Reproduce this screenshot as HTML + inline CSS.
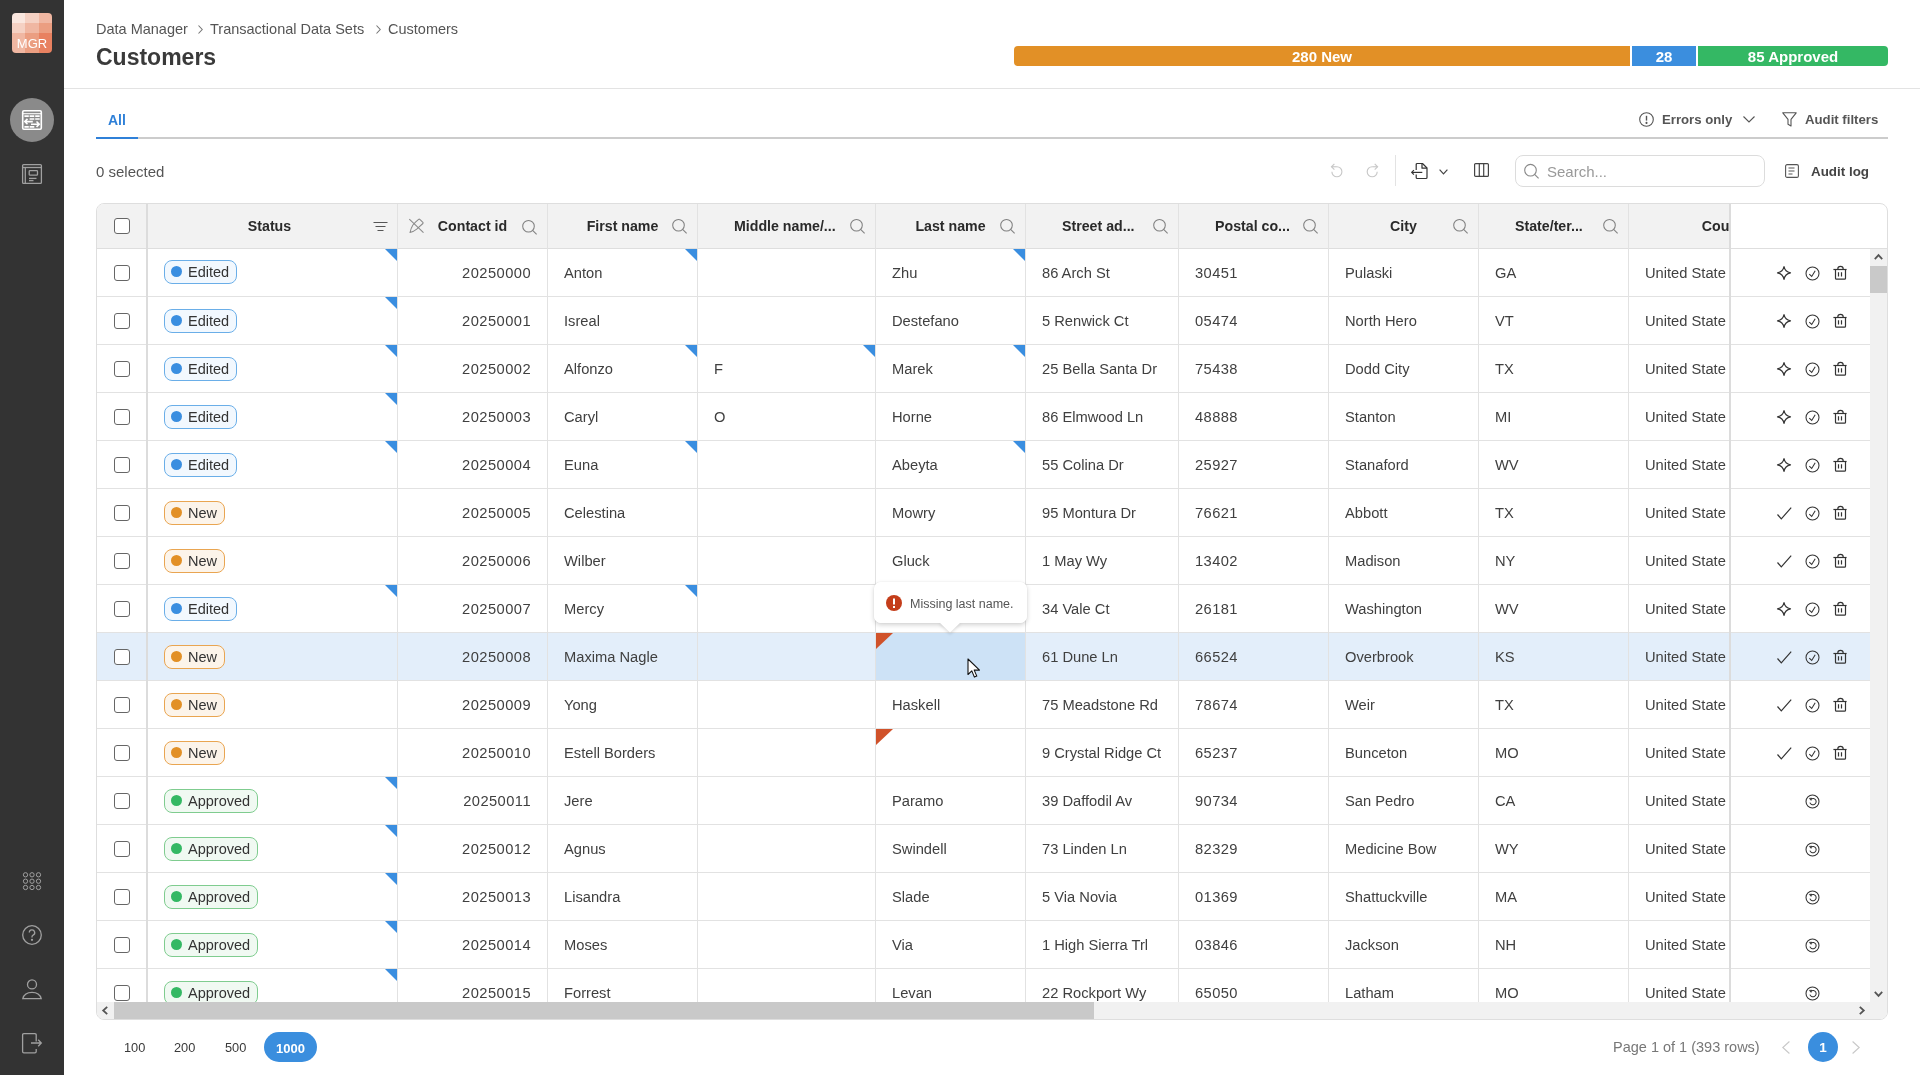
<!DOCTYPE html><html><head><meta charset="utf-8"><title>Customers</title><style>
*{box-sizing:border-box;margin:0;padding:0}
html,body{width:1920px;height:1075px;overflow:hidden;background:#fff}
body{position:relative;font-family:"Liberation Sans",sans-serif;color:#333}
.abs{position:absolute}
svg{display:block;overflow:visible}
.t{position:absolute;white-space:nowrap;line-height:1}
.cell{position:absolute;font-size:14.7px;color:#404040;white-space:nowrap;line-height:48px;height:47px}
.num{letter-spacing:0.45px}
.hd{position:absolute;top:204px;height:44px;line-height:44px;font-size:14.2px;font-weight:bold;color:#2a2a2a;text-align:center;white-space:nowrap}
.vl{position:absolute;width:1px;background:#e2e2e2}
.hl{position:absolute;height:1px;background:#e2e2e2}
.cb{position:absolute;width:16px;height:16px;border:1.5px solid #666;border-radius:3px;background:#fff}
.badge{position:absolute;height:24px;border-radius:8px;border:1px solid;font-size:14.5px;line-height:22px;padding-left:23px;color:#333}
.badge i{position:absolute;left:6px;top:5px;width:11px;height:11px;border-radius:50%}
.tri{position:absolute;width:0;height:0}
</style></head><body><div id="root" style="position:absolute;left:0;top:0;width:1920px;height:1075px;will-change:transform">
<div class="abs" style="left:0;top:0;width:64px;height:1075px;background:#333333"></div>
<div class="abs" style="left:12px;top:13px;width:40px;height:40px;border-radius:4px;overflow:hidden">
<div class="abs" style="left:0px;top:0px;width:13px;height:10px;background:#fae7df"></div>
<div class="abs" style="left:13px;top:0px;width:14px;height:10px;background:#f5d1c3"></div>
<div class="abs" style="left:27px;top:0px;width:13px;height:10px;background:#f0b7a2"></div>
<div class="abs" style="left:0px;top:10px;width:13px;height:10px;background:#f5d1c3"></div>
<div class="abs" style="left:13px;top:10px;width:14px;height:10px;background:#f0b7a2"></div>
<div class="abs" style="left:27px;top:10px;width:13px;height:10px;background:#eb9e81"></div>
<div class="abs" style="left:0px;top:20px;width:13px;height:20px;background:#f0b7a2"></div>
<div class="abs" style="left:13px;top:20px;width:14px;height:20px;background:#eb9e81"></div>
<div class="abs" style="left:27px;top:20px;width:13px;height:20px;background:#e88160"></div>
<div class="t" style="left:0;top:24px;width:40px;text-align:center;font-size:13px;color:#fff;letter-spacing:0px">MGR</div>
</div>
<div class="abs" style="left:10px;top:98px;width:44px;height:44px;border-radius:50%;background:#8a8a8a"></div>
<svg class="abs" style="left:18px;top:106px" width="28" height="28" viewBox="0 0 28 28" fill="none" stroke="#fff">
<rect x="4.7" y="4.7" width="18.6" height="18.6" rx="1.2" stroke-width="1.6"/><line x1="4.7" y1="7.7" x2="23.3" y2="7.7" stroke-width="1.1"/>
<path d="M6.4 10.2h4.4M11.6 10.2h4.7M17.2 10.2h4.5M11.6 13h4.7M17.2 13h4.5M6.4 20.9h4.4M11.6 20.9h4.7" stroke-width="1.7"/>
<path d="M6.8 15.6h8M9.5 12.9L6.8 15.6l2.7 2.7M13 18.2h8.2M18.5 15.5l2.7 2.7-2.7 2.7" stroke-width="1.6"/>
</svg>
<svg class="abs" style="left:18px;top:160px" width="28" height="28" viewBox="0 0 28 28" fill="none" stroke="#a0a0a0" stroke-width="1.3">
<rect x="4.6" y="4.6" width="18.8" height="18.8" rx="1"/><line x1="4.6" y1="7.5" x2="23.4" y2="7.5"/><line x1="7.3" y1="7.5" x2="7.3" y2="23.4"/>
<rect x="11.2" y="10.6" width="8.3" height="4.6" rx="0.8"/><line x1="11" y1="18.4" x2="18.5" y2="18.4"/><line x1="11" y1="20.6" x2="15.5" y2="20.6"/>
</svg>
<svg class="abs" style="left:22px;top:872px" width="20" height="18" viewBox="0 0 20 18" fill="none" stroke="#a0a0a0" stroke-width="1"><circle cx="3.5" cy="2.8" r="2.15"/><circle cx="10" cy="2.8" r="2.15"/><circle cx="16.5" cy="2.8" r="2.15"/><circle cx="3.5" cy="9.2" r="2.15"/><circle cx="10" cy="9.2" r="2.15"/><circle cx="16.5" cy="9.2" r="2.15"/><circle cx="3.5" cy="15.5" r="2.15"/><circle cx="10" cy="15.5" r="2.15"/><circle cx="16.5" cy="15.5" r="2.15"/></svg>
<svg class="abs" style="left:22px;top:925px" width="20" height="20" viewBox="0 0 20 20" fill="none" stroke="#a0a0a0" stroke-width="1.3">
<circle cx="10" cy="10" r="9.3"/><path d="M7.3 7.6a2.7 2.7 0 1 1 3.8 2.5c-0.8 0.4-1.1 0.9-1.1 1.7v0.8"/><circle cx="10" cy="14.8" r="0.5" fill="#a0a0a0"/>
</svg>
<svg class="abs" style="left:22px;top:978px" width="20" height="21" viewBox="0 0 20 21" fill="none" stroke="#a0a0a0" stroke-width="1.3">
<circle cx="10" cy="6.4" r="4.5"/><path d="M0.8 20.6C2 16.2 5.5 14.4 10 14.4S18 16.2 19.2 20.6Z"/>
</svg>
<svg class="abs" style="left:22px;top:1033px" width="20" height="20" viewBox="0 0 20 20" fill="none" stroke="#a0a0a0" stroke-width="1.3">
<path d="M14.2 8.6V2Q14.2 0.7 12.9 0.7H1.9Q0.6 0.7 0.6 2V18.5Q0.6 19.8 1.9 19.8H12.9Q14.2 19.8 14.2 18.5V15.9"/><path d="M9 10H19.3M16.2 6.8L19.3 10 16.2 13.2"/>
</svg>
<div class="t" style="left:96px;top:22px;font-size:14.5px;color:#555">Data Manager</div>
<svg class="abs" style="left:198px;top:25px" width="5" height="9" viewBox="0 0 5 9" fill="none" stroke="#777" stroke-width="1.1"><path d="M0.5 0.5L4.2 4.5L0.5 8.5"/></svg>
<div class="t" style="left:210px;top:22px;font-size:14.5px;color:#555">Transactional Data Sets</div>
<svg class="abs" style="left:376px;top:25px" width="5" height="9" viewBox="0 0 5 9" fill="none" stroke="#777" stroke-width="1.1"><path d="M0.5 0.5L4.2 4.5L0.5 8.5"/></svg>
<div class="t" style="left:388px;top:22px;font-size:14.5px;color:#555">Customers</div>
<div class="t" style="left:96px;top:45.5px;font-size:23px;font-weight:bold;color:#3a3a3a">Customers</div>
<div class="abs" style="left:1014px;top:46px;width:616px;height:20px;background:#e29026;border-radius:4px 0 0 4px"></div>
<div class="abs" style="left:1632px;top:46px;width:64px;height:20px;background:#3b8ede"></div>
<div class="abs" style="left:1698px;top:46px;width:190px;height:20px;background:#34b864;border-radius:0 4px 4px 0"></div>
<div class="t" style="left:1014px;top:49px;width:616px;text-align:center;font-size:15px;font-weight:bold;color:#fff">280 New</div>
<div class="t" style="left:1632px;top:49px;width:64px;text-align:center;font-size:15px;font-weight:bold;color:#fff">28</div>
<div class="t" style="left:1698px;top:49px;width:190px;text-align:center;font-size:15px;font-weight:bold;color:#fff">85 Approved</div>
<div class="abs" style="left:64px;top:88px;width:1856px;height:1px;background:#e3e3e3"></div>
<div class="abs" style="left:96px;top:137px;width:1792px;height:2px;background:#cccccc"></div>
<div class="abs" style="left:96px;top:137px;width:42px;height:2px;background:#2f80d8"></div>
<div class="t" style="left:108px;top:112.5px;font-size:14px;font-weight:bold;color:#2f80d8">All</div>
<svg class="abs" style="left:1639px;top:112px" width="15" height="15" viewBox="0 0 15 15" fill="none" stroke="#555" stroke-width="1.1">
<circle cx="7.5" cy="7.5" r="6.8"/><line x1="7.5" y1="3.8" x2="7.5" y2="8.6" stroke-width="1.4"/><circle cx="7.5" cy="10.9" r="0.5" fill="#555"/>
</svg>
<div class="t" style="left:1662px;top:113px;font-size:13.2px;font-weight:bold;color:#555">Errors only</div>
<svg class="abs" style="left:1743px;top:116px" width="12" height="7" viewBox="0 0 12 7" fill="none" stroke="#555" stroke-width="1.1"><path d="M0.5 0.5L6 6L11.5 0.5"/></svg>
<svg class="abs" style="left:1782px;top:112px" width="15" height="15" viewBox="0 0 15 15" fill="none" stroke="#555" stroke-width="1.1" stroke-linejoin="round">
<path d="M0.8 0.8h13.4L9 7.3v6.6L6 12.2V7.3z"/>
</svg>
<div class="t" style="left:1805px;top:113px;font-size:13.2px;font-weight:bold;color:#555">Audit filters</div>
<div class="t" style="left:96px;top:164px;font-size:15px;color:#555">0 selected</div>
<svg class="abs" style="left:1330px;top:163px" width="14" height="14" viewBox="0 0 14 14" fill="none" stroke="#c8c8c8" stroke-width="1.15">
<path d="M6.9 3.75A5 5 0 1 1 1.9 8.75"/><path d="M1.5 3.75H6.9"/><path d="M4.4 0.9L1.5 3.75 4.4 6.6"/>
</svg>
<svg class="abs" style="left:1365px;top:163px" width="14" height="14" viewBox="0 0 14 14" fill="none" stroke="#c8c8c8" stroke-width="1.15">
<path d="M7.2 3.75A5 5 0 1 0 12.2 8.75"/><path d="M7.2 3.75H12.6"/><path d="M9.7 0.9L12.6 3.75 9.7 6.6"/>
</svg>
<div class="abs" style="left:1395px;top:155px;width:1px;height:31px;background:#e3e3e3"></div>
<svg class="abs" style="left:1411px;top:163px" width="18" height="16" viewBox="0 0 18 16" fill="none" stroke="#333" stroke-width="1.2" stroke-linejoin="round">
<path d="M5.2 7V1.5Q5.2 0.5 6.2 0.5H11.5L16 5V14.5Q16 15.5 15 15.5H6.2Q5.2 15.5 5.2 14.5V11.6"/><path d="M11 0.5V5.2H16"/><path d="M0.7 9.4H11.3"/><path d="M2.9 7.2L0.7 9.4 2.9 11.6"/>
</svg>
<svg class="abs" style="left:1439px;top:169px" width="9" height="6" viewBox="0 0 9 6" fill="none" stroke="#444" stroke-width="1.2"><path d="M0.6 0.6L4.5 4.8L8.4 0.6"/></svg>
<svg class="abs" style="left:1474px;top:163px" width="15" height="14" viewBox="0 0 15 14" fill="none" stroke="#444" stroke-width="1.2">
<rect x="0.6" y="0.6" width="13.8" height="12.8" rx="1"/><line x1="5.3" y1="0.6" x2="5.3" y2="13.4"/><line x1="9.7" y1="0.6" x2="9.7" y2="13.4"/>
</svg>
<div class="abs" style="left:1515px;top:155px;width:250px;height:32px;border:1px solid #dcdcdc;border-radius:8px;background:#fff"></div>
<svg class="abs" style="left:1524px;top:164px" width="15" height="15" viewBox="0 0 15 15" fill="none" stroke="#888" stroke-width="1.1"><circle cx="6.5" cy="6.2" r="5.8"/><line x1="10.6" y1="10.4" x2="14.6" y2="14.4"/></svg>
<div class="t" style="left:1547px;top:164px;font-size:15px;color:#999">Search...</div>
<svg class="abs" style="left:1785px;top:164px" width="14" height="14" viewBox="0 0 14 14" fill="none" stroke="#555" stroke-width="1.1">
<rect x="0.6" y="0.6" width="12.8" height="12.8" rx="1.5"/><path d="M3.5 4h6M3.5 7h6M3.5 10h4"/>
</svg>
<div class="t" style="left:1811px;top:165px;font-size:13.4px;font-weight:bold;color:#444">Audit log</div>
<div class="abs" style="left:96px;top:203px;width:1792px;height:817px;border:1px solid #dedede;border-radius:8px;background:#fff;overflow:hidden">
</div>
<div class="abs" style="left:97px;top:204px;width:1790px;height:815px;border-radius:7px;overflow:hidden">
<div class="abs" style="left:0;top:0;width:1632px;height:44px;background:#f2f2f2"></div>
<div class="hl" style="left:0;top:44px;width:1790px;background:#dedede"></div>
<div class="abs" style="left:0;top:429px;width:1773px;height:47px;background:#e3eefa"></div>
<div class="abs" style="left:779px;top:429px;width:149px;height:47px;background:#cde2f6"></div>
<div class="hl" style="left:0;top:92px;width:1773px"></div>
<div class="hl" style="left:0;top:140px;width:1773px"></div>
<div class="hl" style="left:0;top:188px;width:1773px"></div>
<div class="hl" style="left:0;top:236px;width:1773px"></div>
<div class="hl" style="left:0;top:284px;width:1773px"></div>
<div class="hl" style="left:0;top:332px;width:1773px"></div>
<div class="hl" style="left:0;top:380px;width:1773px"></div>
<div class="hl" style="left:0;top:428px;width:1773px"></div>
<div class="hl" style="left:0;top:476px;width:1773px"></div>
<div class="hl" style="left:0;top:524px;width:1773px"></div>
<div class="hl" style="left:0;top:572px;width:1773px"></div>
<div class="hl" style="left:0;top:620px;width:1773px"></div>
<div class="hl" style="left:0;top:668px;width:1773px"></div>
<div class="hl" style="left:0;top:716px;width:1773px"></div>
<div class="hl" style="left:0;top:764px;width:1773px"></div>
<div class="vl" style="left:300px;top:0;height:798px"></div>
<div class="vl" style="left:450px;top:0;height:798px"></div>
<div class="vl" style="left:600px;top:0;height:798px"></div>
<div class="vl" style="left:778px;top:0;height:798px"></div>
<div class="vl" style="left:928px;top:0;height:798px"></div>
<div class="vl" style="left:1081px;top:0;height:798px"></div>
<div class="vl" style="left:1231px;top:0;height:798px"></div>
<div class="vl" style="left:1381px;top:0;height:798px"></div>
<div class="vl" style="left:1531px;top:0;height:798px"></div>
<div class="abs" style="left:49px;top:0;width:2px;height:798px;background:#dcdcdc"></div>
<div class="cb" style="left:17px;top:14px"></div>
<div class="hd" style="left:48px;top:0;width:249px">Status</div>
<svg class="abs" style="left:276px;top:18px" width="15" height="9" viewBox="0 0 15 9" fill="none" stroke="#555" stroke-width="1.2"><path d="M0.5 0.5h14M2.5 4.5h10M4.5 8.5h6"/></svg>
<div class="hd" style="left:301px;top:0;width:149px">Contact id</div>
<svg class="abs" style="left:312px;top:15px" width="15" height="14" viewBox="0 0 15 14" fill="none" stroke="#8a8a8a" stroke-width="1.05" stroke-linejoin="round">
<path d="M0.3 0.2L14.5 13.7"/><path d="M3.9 6L6.5 3.2 9.6 0.4Q10.2-0.1 10.8 0.4L13.9 3.4Q14.4 4 13.9 4.5L7.7 10.2Q5 12.5 1 13.5Q2 9 3.9 6z"/>
</svg>
<svg class="abs" style="left:425px;top:16px" width="15" height="15" viewBox="0 0 15 15" fill="none" stroke="#808080" stroke-width="1.05"><circle cx="6.5" cy="6.2" r="5.8"/><line x1="10.6" y1="10.4" x2="14.6" y2="14.4"/></svg>
<div class="hd" style="left:487px;top:0;width:77px;text-align:center">First name</div>
<svg class="abs" style="left:575px;top:15px" width="15" height="15" viewBox="0 0 15 15" fill="none" stroke="#808080" stroke-width="1.05"><circle cx="6.5" cy="6.2" r="5.8"/><line x1="10.6" y1="10.4" x2="14.6" y2="14.4"/></svg>
<div class="hd" style="left:637px;top:0;width:105px;text-align:left">Middle name/...</div>
<svg class="abs" style="left:753px;top:15px" width="15" height="15" viewBox="0 0 15 15" fill="none" stroke="#808080" stroke-width="1.05"><circle cx="6.5" cy="6.2" r="5.8"/><line x1="10.6" y1="10.4" x2="14.6" y2="14.4"/></svg>
<div class="hd" style="left:815px;top:0;width:77px;text-align:center">Last name</div>
<svg class="abs" style="left:903px;top:15px" width="15" height="15" viewBox="0 0 15 15" fill="none" stroke="#808080" stroke-width="1.05"><circle cx="6.5" cy="6.2" r="5.8"/><line x1="10.6" y1="10.4" x2="14.6" y2="14.4"/></svg>
<div class="hd" style="left:965px;top:0;width:80px;text-align:left">Street ad...</div>
<svg class="abs" style="left:1056px;top:15px" width="15" height="15" viewBox="0 0 15 15" fill="none" stroke="#808080" stroke-width="1.05"><circle cx="6.5" cy="6.2" r="5.8"/><line x1="10.6" y1="10.4" x2="14.6" y2="14.4"/></svg>
<div class="hd" style="left:1118px;top:0;width:77px;text-align:left">Postal co...</div>
<svg class="abs" style="left:1206px;top:15px" width="15" height="15" viewBox="0 0 15 15" fill="none" stroke="#808080" stroke-width="1.05"><circle cx="6.5" cy="6.2" r="5.8"/><line x1="10.6" y1="10.4" x2="14.6" y2="14.4"/></svg>
<div class="hd" style="left:1268px;top:0;width:77px;text-align:center">City</div>
<svg class="abs" style="left:1356px;top:15px" width="15" height="15" viewBox="0 0 15 15" fill="none" stroke="#808080" stroke-width="1.05"><circle cx="6.5" cy="6.2" r="5.8"/><line x1="10.6" y1="10.4" x2="14.6" y2="14.4"/></svg>
<div class="hd" style="left:1418px;top:0;width:77px;text-align:left">State/ter...</div>
<svg class="abs" style="left:1506px;top:15px" width="15" height="15" viewBox="0 0 15 15" fill="none" stroke="#808080" stroke-width="1.05"><circle cx="6.5" cy="6.2" r="5.8"/><line x1="10.6" y1="10.4" x2="14.6" y2="14.4"/></svg>
<div class="hd" style="left:1532px;top:0;width:200px">Country</div>
<div class="cb" style="left:17px;top:61px"></div>
<div class="badge" style="left:67px;top:56px;width:73px;border-color:#6aaee8;background:#f2f8fe"><i style="background:#3a8ee0"></i>Edited</div>
<div class="cell num" style="left:301px;top:45px;width:133px;text-align:right;letter-spacing:0.45px">20250000</div>
<div class="cell" style="left:467px;top:45px">Anton</div>
<div class="cell" style="left:795px;top:45px">Zhu</div>
<div class="cell" style="left:945px;top:45px">86 Arch St</div>
<div class="cell" style="left:1098px;top:45px;letter-spacing:0.4px">30451</div>
<div class="cell" style="left:1248px;top:45px">Pulaski</div>
<div class="cell" style="left:1398px;top:45px">GA</div>
<div class="cell" style="left:1548px;top:45px;width:84px;overflow:hidden">United State</div>
<div class="tri" style="left:288px;top:45px;border-top:12px solid #3a8ee0;border-left:12px solid transparent"></div>
<div class="tri" style="left:588px;top:45px;border-top:12px solid #3a8ee0;border-left:12px solid transparent"></div>
<div class="tri" style="left:916px;top:45px;border-top:12px solid #3a8ee0;border-left:12px solid transparent"></div>
<div class="cb" style="left:17px;top:109px"></div>
<div class="badge" style="left:67px;top:105px;width:73px;border-color:#6aaee8;background:#f2f8fe"><i style="background:#3a8ee0"></i>Edited</div>
<div class="cell num" style="left:301px;top:93px;width:133px;text-align:right;letter-spacing:0.45px">20250001</div>
<div class="cell" style="left:467px;top:93px">Isreal</div>
<div class="cell" style="left:795px;top:93px">Destefano</div>
<div class="cell" style="left:945px;top:93px">5 Renwick Ct</div>
<div class="cell" style="left:1098px;top:93px;letter-spacing:0.4px">05474</div>
<div class="cell" style="left:1248px;top:93px">North Hero</div>
<div class="cell" style="left:1398px;top:93px">VT</div>
<div class="cell" style="left:1548px;top:93px;width:84px;overflow:hidden">United State</div>
<div class="tri" style="left:288px;top:93px;border-top:12px solid #3a8ee0;border-left:12px solid transparent"></div>
<div class="cb" style="left:17px;top:157px"></div>
<div class="badge" style="left:67px;top:153px;width:73px;border-color:#6aaee8;background:#f2f8fe"><i style="background:#3a8ee0"></i>Edited</div>
<div class="cell num" style="left:301px;top:141px;width:133px;text-align:right;letter-spacing:0.45px">20250002</div>
<div class="cell" style="left:467px;top:141px">Alfonzo</div>
<div class="cell" style="left:617px;top:141px">F</div>
<div class="cell" style="left:795px;top:141px">Marek</div>
<div class="cell" style="left:945px;top:141px">25 Bella Santa Dr</div>
<div class="cell" style="left:1098px;top:141px;letter-spacing:0.4px">75438</div>
<div class="cell" style="left:1248px;top:141px">Dodd City</div>
<div class="cell" style="left:1398px;top:141px">TX</div>
<div class="cell" style="left:1548px;top:141px;width:84px;overflow:hidden">United State</div>
<div class="tri" style="left:288px;top:141px;border-top:12px solid #3a8ee0;border-left:12px solid transparent"></div>
<div class="tri" style="left:588px;top:141px;border-top:12px solid #3a8ee0;border-left:12px solid transparent"></div>
<div class="tri" style="left:766px;top:141px;border-top:12px solid #3a8ee0;border-left:12px solid transparent"></div>
<div class="tri" style="left:916px;top:141px;border-top:12px solid #3a8ee0;border-left:12px solid transparent"></div>
<div class="cb" style="left:17px;top:205px"></div>
<div class="badge" style="left:67px;top:201px;width:73px;border-color:#6aaee8;background:#f2f8fe"><i style="background:#3a8ee0"></i>Edited</div>
<div class="cell num" style="left:301px;top:189px;width:133px;text-align:right;letter-spacing:0.45px">20250003</div>
<div class="cell" style="left:467px;top:189px">Caryl</div>
<div class="cell" style="left:617px;top:189px">O</div>
<div class="cell" style="left:795px;top:189px">Horne</div>
<div class="cell" style="left:945px;top:189px">86 Elmwood Ln</div>
<div class="cell" style="left:1098px;top:189px;letter-spacing:0.4px">48888</div>
<div class="cell" style="left:1248px;top:189px">Stanton</div>
<div class="cell" style="left:1398px;top:189px">MI</div>
<div class="cell" style="left:1548px;top:189px;width:84px;overflow:hidden">United State</div>
<div class="tri" style="left:288px;top:189px;border-top:12px solid #3a8ee0;border-left:12px solid transparent"></div>
<div class="cb" style="left:17px;top:253px"></div>
<div class="badge" style="left:67px;top:249px;width:73px;border-color:#6aaee8;background:#f2f8fe"><i style="background:#3a8ee0"></i>Edited</div>
<div class="cell num" style="left:301px;top:237px;width:133px;text-align:right;letter-spacing:0.45px">20250004</div>
<div class="cell" style="left:467px;top:237px">Euna</div>
<div class="cell" style="left:795px;top:237px">Abeyta</div>
<div class="cell" style="left:945px;top:237px">55 Colina Dr</div>
<div class="cell" style="left:1098px;top:237px;letter-spacing:0.4px">25927</div>
<div class="cell" style="left:1248px;top:237px">Stanaford</div>
<div class="cell" style="left:1398px;top:237px">WV</div>
<div class="cell" style="left:1548px;top:237px;width:84px;overflow:hidden">United State</div>
<div class="tri" style="left:288px;top:237px;border-top:12px solid #3a8ee0;border-left:12px solid transparent"></div>
<div class="tri" style="left:588px;top:237px;border-top:12px solid #3a8ee0;border-left:12px solid transparent"></div>
<div class="tri" style="left:916px;top:237px;border-top:12px solid #3a8ee0;border-left:12px solid transparent"></div>
<div class="cb" style="left:17px;top:301px"></div>
<div class="badge" style="left:67px;top:297px;width:61px;border-color:#e9a551;background:#fcf4ea"><i style="background:#e29026"></i>New</div>
<div class="cell num" style="left:301px;top:285px;width:133px;text-align:right;letter-spacing:0.45px">20250005</div>
<div class="cell" style="left:467px;top:285px">Celestina</div>
<div class="cell" style="left:795px;top:285px">Mowry</div>
<div class="cell" style="left:945px;top:285px">95 Montura Dr</div>
<div class="cell" style="left:1098px;top:285px;letter-spacing:0.4px">76621</div>
<div class="cell" style="left:1248px;top:285px">Abbott</div>
<div class="cell" style="left:1398px;top:285px">TX</div>
<div class="cell" style="left:1548px;top:285px;width:84px;overflow:hidden">United State</div>
<div class="cb" style="left:17px;top:349px"></div>
<div class="badge" style="left:67px;top:345px;width:61px;border-color:#e9a551;background:#fcf4ea"><i style="background:#e29026"></i>New</div>
<div class="cell num" style="left:301px;top:333px;width:133px;text-align:right;letter-spacing:0.45px">20250006</div>
<div class="cell" style="left:467px;top:333px">Wilber</div>
<div class="cell" style="left:795px;top:333px">Gluck</div>
<div class="cell" style="left:945px;top:333px">1 May Wy</div>
<div class="cell" style="left:1098px;top:333px;letter-spacing:0.4px">13402</div>
<div class="cell" style="left:1248px;top:333px">Madison</div>
<div class="cell" style="left:1398px;top:333px">NY</div>
<div class="cell" style="left:1548px;top:333px;width:84px;overflow:hidden">United State</div>
<div class="cb" style="left:17px;top:397px"></div>
<div class="badge" style="left:67px;top:393px;width:73px;border-color:#6aaee8;background:#f2f8fe"><i style="background:#3a8ee0"></i>Edited</div>
<div class="cell num" style="left:301px;top:381px;width:133px;text-align:right;letter-spacing:0.45px">20250007</div>
<div class="cell" style="left:467px;top:381px">Mercy</div>
<div class="cell" style="left:945px;top:381px">34 Vale Ct</div>
<div class="cell" style="left:1098px;top:381px;letter-spacing:0.4px">26181</div>
<div class="cell" style="left:1248px;top:381px">Washington</div>
<div class="cell" style="left:1398px;top:381px">WV</div>
<div class="cell" style="left:1548px;top:381px;width:84px;overflow:hidden">United State</div>
<div class="tri" style="left:288px;top:381px;border-top:12px solid #3a8ee0;border-left:12px solid transparent"></div>
<div class="tri" style="left:588px;top:381px;border-top:12px solid #3a8ee0;border-left:12px solid transparent"></div>
<div class="cb" style="left:17px;top:445px"></div>
<div class="badge" style="left:67px;top:441px;width:61px;border-color:#e9a551;background:#fcf4ea"><i style="background:#e29026"></i>New</div>
<div class="cell num" style="left:301px;top:429px;width:133px;text-align:right;letter-spacing:0.45px">20250008</div>
<div class="cell" style="left:467px;top:429px">Maxima Nagle</div>
<div class="cell" style="left:945px;top:429px">61 Dune Ln</div>
<div class="cell" style="left:1098px;top:429px;letter-spacing:0.4px">66524</div>
<div class="cell" style="left:1248px;top:429px">Overbrook</div>
<div class="cell" style="left:1398px;top:429px">KS</div>
<div class="cell" style="left:1548px;top:429px;width:84px;overflow:hidden">United State</div>
<div class="tri" style="left:779px;top:429px;border-top:16px solid #d0522a;border-right:17px solid transparent"></div>
<div class="cb" style="left:17px;top:493px"></div>
<div class="badge" style="left:67px;top:489px;width:61px;border-color:#e9a551;background:#fcf4ea"><i style="background:#e29026"></i>New</div>
<div class="cell num" style="left:301px;top:477px;width:133px;text-align:right;letter-spacing:0.45px">20250009</div>
<div class="cell" style="left:467px;top:477px">Yong</div>
<div class="cell" style="left:795px;top:477px">Haskell</div>
<div class="cell" style="left:945px;top:477px">75 Meadstone Rd</div>
<div class="cell" style="left:1098px;top:477px;letter-spacing:0.4px">78674</div>
<div class="cell" style="left:1248px;top:477px">Weir</div>
<div class="cell" style="left:1398px;top:477px">TX</div>
<div class="cell" style="left:1548px;top:477px;width:84px;overflow:hidden">United State</div>
<div class="cb" style="left:17px;top:541px"></div>
<div class="badge" style="left:67px;top:537px;width:61px;border-color:#e9a551;background:#fcf4ea"><i style="background:#e29026"></i>New</div>
<div class="cell num" style="left:301px;top:525px;width:133px;text-align:right;letter-spacing:0.45px">20250010</div>
<div class="cell" style="left:467px;top:525px">Estell Borders</div>
<div class="cell" style="left:945px;top:525px">9 Crystal Ridge Ct</div>
<div class="cell" style="left:1098px;top:525px;letter-spacing:0.4px">65237</div>
<div class="cell" style="left:1248px;top:525px">Bunceton</div>
<div class="cell" style="left:1398px;top:525px">MO</div>
<div class="cell" style="left:1548px;top:525px;width:84px;overflow:hidden">United State</div>
<div class="tri" style="left:779px;top:525px;border-top:16px solid #d0522a;border-right:17px solid transparent"></div>
<div class="cb" style="left:17px;top:589px"></div>
<div class="badge" style="left:67px;top:585px;width:94px;border-color:#7fcc8f;background:#f0f9f2"><i style="background:#34b864"></i>Approved</div>
<div class="cell num" style="left:301px;top:573px;width:133px;text-align:right;letter-spacing:0.45px">20250011</div>
<div class="cell" style="left:467px;top:573px">Jere</div>
<div class="cell" style="left:795px;top:573px">Paramo</div>
<div class="cell" style="left:945px;top:573px">39 Daffodil Av</div>
<div class="cell" style="left:1098px;top:573px;letter-spacing:0.4px">90734</div>
<div class="cell" style="left:1248px;top:573px">San Pedro</div>
<div class="cell" style="left:1398px;top:573px">CA</div>
<div class="cell" style="left:1548px;top:573px;width:84px;overflow:hidden">United State</div>
<div class="tri" style="left:288px;top:573px;border-top:12px solid #3a8ee0;border-left:12px solid transparent"></div>
<div class="cb" style="left:17px;top:637px"></div>
<div class="badge" style="left:67px;top:633px;width:94px;border-color:#7fcc8f;background:#f0f9f2"><i style="background:#34b864"></i>Approved</div>
<div class="cell num" style="left:301px;top:621px;width:133px;text-align:right;letter-spacing:0.45px">20250012</div>
<div class="cell" style="left:467px;top:621px">Agnus</div>
<div class="cell" style="left:795px;top:621px">Swindell</div>
<div class="cell" style="left:945px;top:621px">73 Linden Ln</div>
<div class="cell" style="left:1098px;top:621px;letter-spacing:0.4px">82329</div>
<div class="cell" style="left:1248px;top:621px">Medicine Bow</div>
<div class="cell" style="left:1398px;top:621px">WY</div>
<div class="cell" style="left:1548px;top:621px;width:84px;overflow:hidden">United State</div>
<div class="tri" style="left:288px;top:621px;border-top:12px solid #3a8ee0;border-left:12px solid transparent"></div>
<div class="cb" style="left:17px;top:685px"></div>
<div class="badge" style="left:67px;top:681px;width:94px;border-color:#7fcc8f;background:#f0f9f2"><i style="background:#34b864"></i>Approved</div>
<div class="cell num" style="left:301px;top:669px;width:133px;text-align:right;letter-spacing:0.45px">20250013</div>
<div class="cell" style="left:467px;top:669px">Lisandra</div>
<div class="cell" style="left:795px;top:669px">Slade</div>
<div class="cell" style="left:945px;top:669px">5 Via Novia</div>
<div class="cell" style="left:1098px;top:669px;letter-spacing:0.4px">01369</div>
<div class="cell" style="left:1248px;top:669px">Shattuckville</div>
<div class="cell" style="left:1398px;top:669px">MA</div>
<div class="cell" style="left:1548px;top:669px;width:84px;overflow:hidden">United State</div>
<div class="tri" style="left:288px;top:669px;border-top:12px solid #3a8ee0;border-left:12px solid transparent"></div>
<div class="cb" style="left:17px;top:733px"></div>
<div class="badge" style="left:67px;top:729px;width:94px;border-color:#7fcc8f;background:#f0f9f2"><i style="background:#34b864"></i>Approved</div>
<div class="cell num" style="left:301px;top:717px;width:133px;text-align:right;letter-spacing:0.45px">20250014</div>
<div class="cell" style="left:467px;top:717px">Moses</div>
<div class="cell" style="left:795px;top:717px">Via</div>
<div class="cell" style="left:945px;top:717px">1 High Sierra Trl</div>
<div class="cell" style="left:1098px;top:717px;letter-spacing:0.4px">03846</div>
<div class="cell" style="left:1248px;top:717px">Jackson</div>
<div class="cell" style="left:1398px;top:717px">NH</div>
<div class="cell" style="left:1548px;top:717px;width:84px;overflow:hidden">United State</div>
<div class="tri" style="left:288px;top:717px;border-top:12px solid #3a8ee0;border-left:12px solid transparent"></div>
<div class="cb" style="left:17px;top:781px"></div>
<div class="badge" style="left:67px;top:777px;width:94px;border-color:#7fcc8f;background:#f0f9f2"><i style="background:#34b864"></i>Approved</div>
<div class="cell num" style="left:301px;top:765px;width:133px;text-align:right;letter-spacing:0.45px">20250015</div>
<div class="cell" style="left:467px;top:765px">Forrest</div>
<div class="cell" style="left:795px;top:765px">Levan</div>
<div class="cell" style="left:945px;top:765px">22 Rockport Wy</div>
<div class="cell" style="left:1098px;top:765px;letter-spacing:0.4px">65050</div>
<div class="cell" style="left:1248px;top:765px">Latham</div>
<div class="cell" style="left:1398px;top:765px">MO</div>
<div class="cell" style="left:1548px;top:765px;width:84px;overflow:hidden">United State</div>
<div class="tri" style="left:288px;top:765px;border-top:12px solid #3a8ee0;border-left:12px solid transparent"></div>
<div class="abs" style="left:1632px;top:0;width:141px;height:798px;background:transparent"></div>
<div class="abs" style="left:1634px;top:0;width:139px;height:44px;background:#fff"></div>
<div class="abs" style="left:1632px;top:0;width:2px;height:798px;background:#dcdcdc"></div>
<svg class="abs" style="left:1680px;top:62px" width="15" height="15" viewBox="0 0 15 15" fill="none" stroke="#333" stroke-width="1.2" stroke-linejoin="round"><path d="M7 0.7Q8 5.8 13.5 6.8 8 7.8 7 13.3 6 7.8 0.5 6.8 6 5.8 7 0.7z"/></svg>
<svg class="abs" style="left:1707.5px;top:61.5px" width="15" height="15" viewBox="0 0 15 15" fill="none" stroke="#333" stroke-width="1.05"><circle cx="7.5" cy="7.5" r="6.5"/><path d="M4.3 8.2l2.4 2.3 3.5-5.8"/></svg>
<svg class="abs" style="left:1736px;top:62px" width="15" height="15" viewBox="0 0 15 15" fill="none" stroke="#333" stroke-width="1.2"><path d="M0.4 3.5h13.2"/><path d="M2.5 3.5v8.7a1 1 0 0 0 1 1h8a1 1 0 0 0 1-1v-8.7"/><path d="M4.8 3.5V3a2.7 2.7 0 0 1 5.4 0v0.5"/><path d="M5.5 6.3v4.3M8.5 6.3v4.3"/></svg>
<svg class="abs" style="left:1680px;top:110px" width="15" height="15" viewBox="0 0 15 15" fill="none" stroke="#333" stroke-width="1.2" stroke-linejoin="round"><path d="M7 0.7Q8 5.8 13.5 6.8 8 7.8 7 13.3 6 7.8 0.5 6.8 6 5.8 7 0.7z"/></svg>
<svg class="abs" style="left:1707.5px;top:109.5px" width="15" height="15" viewBox="0 0 15 15" fill="none" stroke="#333" stroke-width="1.05"><circle cx="7.5" cy="7.5" r="6.5"/><path d="M4.3 8.2l2.4 2.3 3.5-5.8"/></svg>
<svg class="abs" style="left:1736px;top:110px" width="15" height="15" viewBox="0 0 15 15" fill="none" stroke="#333" stroke-width="1.2"><path d="M0.4 3.5h13.2"/><path d="M2.5 3.5v8.7a1 1 0 0 0 1 1h8a1 1 0 0 0 1-1v-8.7"/><path d="M4.8 3.5V3a2.7 2.7 0 0 1 5.4 0v0.5"/><path d="M5.5 6.3v4.3M8.5 6.3v4.3"/></svg>
<svg class="abs" style="left:1680px;top:158px" width="15" height="15" viewBox="0 0 15 15" fill="none" stroke="#333" stroke-width="1.2" stroke-linejoin="round"><path d="M7 0.7Q8 5.8 13.5 6.8 8 7.8 7 13.3 6 7.8 0.5 6.8 6 5.8 7 0.7z"/></svg>
<svg class="abs" style="left:1707.5px;top:157.5px" width="15" height="15" viewBox="0 0 15 15" fill="none" stroke="#333" stroke-width="1.05"><circle cx="7.5" cy="7.5" r="6.5"/><path d="M4.3 8.2l2.4 2.3 3.5-5.8"/></svg>
<svg class="abs" style="left:1736px;top:158px" width="15" height="15" viewBox="0 0 15 15" fill="none" stroke="#333" stroke-width="1.2"><path d="M0.4 3.5h13.2"/><path d="M2.5 3.5v8.7a1 1 0 0 0 1 1h8a1 1 0 0 0 1-1v-8.7"/><path d="M4.8 3.5V3a2.7 2.7 0 0 1 5.4 0v0.5"/><path d="M5.5 6.3v4.3M8.5 6.3v4.3"/></svg>
<svg class="abs" style="left:1680px;top:206px" width="15" height="15" viewBox="0 0 15 15" fill="none" stroke="#333" stroke-width="1.2" stroke-linejoin="round"><path d="M7 0.7Q8 5.8 13.5 6.8 8 7.8 7 13.3 6 7.8 0.5 6.8 6 5.8 7 0.7z"/></svg>
<svg class="abs" style="left:1707.5px;top:205.5px" width="15" height="15" viewBox="0 0 15 15" fill="none" stroke="#333" stroke-width="1.05"><circle cx="7.5" cy="7.5" r="6.5"/><path d="M4.3 8.2l2.4 2.3 3.5-5.8"/></svg>
<svg class="abs" style="left:1736px;top:206px" width="15" height="15" viewBox="0 0 15 15" fill="none" stroke="#333" stroke-width="1.2"><path d="M0.4 3.5h13.2"/><path d="M2.5 3.5v8.7a1 1 0 0 0 1 1h8a1 1 0 0 0 1-1v-8.7"/><path d="M4.8 3.5V3a2.7 2.7 0 0 1 5.4 0v0.5"/><path d="M5.5 6.3v4.3M8.5 6.3v4.3"/></svg>
<svg class="abs" style="left:1680px;top:254px" width="15" height="15" viewBox="0 0 15 15" fill="none" stroke="#333" stroke-width="1.2" stroke-linejoin="round"><path d="M7 0.7Q8 5.8 13.5 6.8 8 7.8 7 13.3 6 7.8 0.5 6.8 6 5.8 7 0.7z"/></svg>
<svg class="abs" style="left:1707.5px;top:253.5px" width="15" height="15" viewBox="0 0 15 15" fill="none" stroke="#333" stroke-width="1.05"><circle cx="7.5" cy="7.5" r="6.5"/><path d="M4.3 8.2l2.4 2.3 3.5-5.8"/></svg>
<svg class="abs" style="left:1736px;top:254px" width="15" height="15" viewBox="0 0 15 15" fill="none" stroke="#333" stroke-width="1.2"><path d="M0.4 3.5h13.2"/><path d="M2.5 3.5v8.7a1 1 0 0 0 1 1h8a1 1 0 0 0 1-1v-8.7"/><path d="M4.8 3.5V3a2.7 2.7 0 0 1 5.4 0v0.5"/><path d="M5.5 6.3v4.3M8.5 6.3v4.3"/></svg>
<svg class="abs" style="left:1680px;top:303px" width="15" height="13" viewBox="0 0 15 13" fill="none" stroke="#333" stroke-width="1.2"><path d="M0.5 7.5l3.8 4.4L14.2 0.6"/></svg>
<svg class="abs" style="left:1707.5px;top:301.5px" width="15" height="15" viewBox="0 0 15 15" fill="none" stroke="#333" stroke-width="1.05"><circle cx="7.5" cy="7.5" r="6.5"/><path d="M4.3 8.2l2.4 2.3 3.5-5.8"/></svg>
<svg class="abs" style="left:1736px;top:302px" width="15" height="15" viewBox="0 0 15 15" fill="none" stroke="#333" stroke-width="1.2"><path d="M0.4 3.5h13.2"/><path d="M2.5 3.5v8.7a1 1 0 0 0 1 1h8a1 1 0 0 0 1-1v-8.7"/><path d="M4.8 3.5V3a2.7 2.7 0 0 1 5.4 0v0.5"/><path d="M5.5 6.3v4.3M8.5 6.3v4.3"/></svg>
<svg class="abs" style="left:1680px;top:351px" width="15" height="13" viewBox="0 0 15 13" fill="none" stroke="#333" stroke-width="1.2"><path d="M0.5 7.5l3.8 4.4L14.2 0.6"/></svg>
<svg class="abs" style="left:1707.5px;top:349.5px" width="15" height="15" viewBox="0 0 15 15" fill="none" stroke="#333" stroke-width="1.05"><circle cx="7.5" cy="7.5" r="6.5"/><path d="M4.3 8.2l2.4 2.3 3.5-5.8"/></svg>
<svg class="abs" style="left:1736px;top:350px" width="15" height="15" viewBox="0 0 15 15" fill="none" stroke="#333" stroke-width="1.2"><path d="M0.4 3.5h13.2"/><path d="M2.5 3.5v8.7a1 1 0 0 0 1 1h8a1 1 0 0 0 1-1v-8.7"/><path d="M4.8 3.5V3a2.7 2.7 0 0 1 5.4 0v0.5"/><path d="M5.5 6.3v4.3M8.5 6.3v4.3"/></svg>
<svg class="abs" style="left:1680px;top:398px" width="15" height="15" viewBox="0 0 15 15" fill="none" stroke="#333" stroke-width="1.2" stroke-linejoin="round"><path d="M7 0.7Q8 5.8 13.5 6.8 8 7.8 7 13.3 6 7.8 0.5 6.8 6 5.8 7 0.7z"/></svg>
<svg class="abs" style="left:1707.5px;top:397.5px" width="15" height="15" viewBox="0 0 15 15" fill="none" stroke="#333" stroke-width="1.05"><circle cx="7.5" cy="7.5" r="6.5"/><path d="M4.3 8.2l2.4 2.3 3.5-5.8"/></svg>
<svg class="abs" style="left:1736px;top:398px" width="15" height="15" viewBox="0 0 15 15" fill="none" stroke="#333" stroke-width="1.2"><path d="M0.4 3.5h13.2"/><path d="M2.5 3.5v8.7a1 1 0 0 0 1 1h8a1 1 0 0 0 1-1v-8.7"/><path d="M4.8 3.5V3a2.7 2.7 0 0 1 5.4 0v0.5"/><path d="M5.5 6.3v4.3M8.5 6.3v4.3"/></svg>
<svg class="abs" style="left:1680px;top:447px" width="15" height="13" viewBox="0 0 15 13" fill="none" stroke="#333" stroke-width="1.2"><path d="M0.5 7.5l3.8 4.4L14.2 0.6"/></svg>
<svg class="abs" style="left:1707.5px;top:445.5px" width="15" height="15" viewBox="0 0 15 15" fill="none" stroke="#333" stroke-width="1.05"><circle cx="7.5" cy="7.5" r="6.5"/><path d="M4.3 8.2l2.4 2.3 3.5-5.8"/></svg>
<svg class="abs" style="left:1736px;top:446px" width="15" height="15" viewBox="0 0 15 15" fill="none" stroke="#333" stroke-width="1.2"><path d="M0.4 3.5h13.2"/><path d="M2.5 3.5v8.7a1 1 0 0 0 1 1h8a1 1 0 0 0 1-1v-8.7"/><path d="M4.8 3.5V3a2.7 2.7 0 0 1 5.4 0v0.5"/><path d="M5.5 6.3v4.3M8.5 6.3v4.3"/></svg>
<svg class="abs" style="left:1680px;top:495px" width="15" height="13" viewBox="0 0 15 13" fill="none" stroke="#333" stroke-width="1.2"><path d="M0.5 7.5l3.8 4.4L14.2 0.6"/></svg>
<svg class="abs" style="left:1707.5px;top:493.5px" width="15" height="15" viewBox="0 0 15 15" fill="none" stroke="#333" stroke-width="1.05"><circle cx="7.5" cy="7.5" r="6.5"/><path d="M4.3 8.2l2.4 2.3 3.5-5.8"/></svg>
<svg class="abs" style="left:1736px;top:494px" width="15" height="15" viewBox="0 0 15 15" fill="none" stroke="#333" stroke-width="1.2"><path d="M0.4 3.5h13.2"/><path d="M2.5 3.5v8.7a1 1 0 0 0 1 1h8a1 1 0 0 0 1-1v-8.7"/><path d="M4.8 3.5V3a2.7 2.7 0 0 1 5.4 0v0.5"/><path d="M5.5 6.3v4.3M8.5 6.3v4.3"/></svg>
<svg class="abs" style="left:1680px;top:543px" width="15" height="13" viewBox="0 0 15 13" fill="none" stroke="#333" stroke-width="1.2"><path d="M0.5 7.5l3.8 4.4L14.2 0.6"/></svg>
<svg class="abs" style="left:1707.5px;top:541.5px" width="15" height="15" viewBox="0 0 15 15" fill="none" stroke="#333" stroke-width="1.05"><circle cx="7.5" cy="7.5" r="6.5"/><path d="M4.3 8.2l2.4 2.3 3.5-5.8"/></svg>
<svg class="abs" style="left:1736px;top:542px" width="15" height="15" viewBox="0 0 15 15" fill="none" stroke="#333" stroke-width="1.2"><path d="M0.4 3.5h13.2"/><path d="M2.5 3.5v8.7a1 1 0 0 0 1 1h8a1 1 0 0 0 1-1v-8.7"/><path d="M4.8 3.5V3a2.7 2.7 0 0 1 5.4 0v0.5"/><path d="M5.5 6.3v4.3M8.5 6.3v4.3"/></svg>
<svg class="abs" style="left:1707.5px;top:589.5px" width="15" height="15" viewBox="0 0 15 15" fill="none" stroke="#333" stroke-width="1.05"><circle cx="7.5" cy="7.5" r="6.5"/><path d="M4.9 8.6a3.2 3.2 0 1 0 1.2-3.6"/><path d="M4.3 4.4l2.4-0.3-0.6 2.3z" fill="#333" stroke-width="0.6"/></svg>
<svg class="abs" style="left:1707.5px;top:637.5px" width="15" height="15" viewBox="0 0 15 15" fill="none" stroke="#333" stroke-width="1.05"><circle cx="7.5" cy="7.5" r="6.5"/><path d="M4.9 8.6a3.2 3.2 0 1 0 1.2-3.6"/><path d="M4.3 4.4l2.4-0.3-0.6 2.3z" fill="#333" stroke-width="0.6"/></svg>
<svg class="abs" style="left:1707.5px;top:685.5px" width="15" height="15" viewBox="0 0 15 15" fill="none" stroke="#333" stroke-width="1.05"><circle cx="7.5" cy="7.5" r="6.5"/><path d="M4.9 8.6a3.2 3.2 0 1 0 1.2-3.6"/><path d="M4.3 4.4l2.4-0.3-0.6 2.3z" fill="#333" stroke-width="0.6"/></svg>
<svg class="abs" style="left:1707.5px;top:733.5px" width="15" height="15" viewBox="0 0 15 15" fill="none" stroke="#333" stroke-width="1.05"><circle cx="7.5" cy="7.5" r="6.5"/><path d="M4.9 8.6a3.2 3.2 0 1 0 1.2-3.6"/><path d="M4.3 4.4l2.4-0.3-0.6 2.3z" fill="#333" stroke-width="0.6"/></svg>
<svg class="abs" style="left:1707.5px;top:781.5px" width="15" height="15" viewBox="0 0 15 15" fill="none" stroke="#333" stroke-width="1.05"><circle cx="7.5" cy="7.5" r="6.5"/><path d="M4.9 8.6a3.2 3.2 0 1 0 1.2-3.6"/><path d="M4.3 4.4l2.4-0.3-0.6 2.3z" fill="#333" stroke-width="0.6"/></svg>
<div class="abs" style="left:1773px;top:45px;width:17px;height:753px;background:#f1f1f1"></div>
<div class="abs" style="left:1773px;top:62px;width:17px;height:27px;background:#c9c9c9"></div>
<svg class="abs" style="left:1777px;top:50px" width="9" height="6" viewBox="0 0 9 6" fill="none" stroke="#555" stroke-width="1.8"><path d="M0.8 5.2L4.5 1.2 8.2 5.2"/></svg>
<svg class="abs" style="left:1777px;top:787px" width="9" height="6" viewBox="0 0 9 6" fill="none" stroke="#555" stroke-width="1.8"><path d="M0.8 0.8L4.5 4.8 8.2 0.8"/></svg>
<div class="abs" style="left:0;top:798px;width:1790px;height:17px;background:#f1f1f1"></div>
<div class="abs" style="left:17px;top:798px;width:980px;height:17px;background:#c9c9c9"></div>
<svg class="abs" style="left:5px;top:802px" width="6" height="9" viewBox="0 0 6 9" fill="none" stroke="#555" stroke-width="1.8"><path d="M5.2 0.8L1.2 4.5 5.2 8.2"/></svg>
<svg class="abs" style="left:1762px;top:802px" width="6" height="9" viewBox="0 0 6 9" fill="none" stroke="#555" stroke-width="1.8"><path d="M0.8 0.8L4.8 4.5 0.8 8.2"/></svg>
</div>
<div class="abs" style="left:874px;top:582px;width:153px;height:41px;background:#fff;border-radius:7px;box-shadow:0 2px 5px rgba(0,0,0,0.18),0 0 1px rgba(0,0,0,0.15)"></div>
<svg class="abs" style="left:939px;top:622px" width="22" height="11" viewBox="0 0 22 11"><path d="M0 0L11 10.5 22 0z" fill="#fff" style="filter:drop-shadow(0 2px 1.5px rgba(0,0,0,0.12))"/></svg>
<div class="abs" style="left:874px;top:582px;width:153px;height:41px;background:#fff;border-radius:7px"></div>
<svg class="abs" style="left:886px;top:595px" width="16" height="16" viewBox="0 0 16 16"><circle cx="8" cy="8" r="8" fill="#c43d1a"/><rect x="7" y="3.5" width="2" height="6" fill="#fff"/><rect x="7" y="11" width="2" height="2" fill="#fff"/></svg>
<div class="t" style="left:910px;top:598px;font-size:12.5px;color:#555">Missing last name.</div>
<svg class="abs" style="left:967px;top:658px" width="14" height="21" viewBox="0 0 14 21"><path d="M1 1v15.5l3.8-3.6 2.6 6.2 2.4-1-2.6-6h5.3z" fill="#fff" stroke="#111" stroke-width="1.1" stroke-linejoin="round"/></svg>
<div class="t" style="left:124px;top:1042px;font-size:12.8px;color:#3a3a3a">100</div>
<div class="t" style="left:174px;top:1042px;font-size:12.8px;color:#3a3a3a">200</div>
<div class="t" style="left:225px;top:1042px;font-size:12.8px;color:#3a3a3a">500</div>
<div class="abs" style="left:264px;top:1032px;width:53px;height:30px;border-radius:15px;background:#3a8ede"></div>
<div class="t" style="left:264px;top:1041.5px;width:53px;text-align:center;font-size:13px;font-weight:bold;color:#fff">1000</div>
<div class="t" style="left:1613px;top:1040px;font-size:14.5px;color:#777">Page 1 of 1 (393 rows)</div>
<svg class="abs" style="left:1782px;top:1041px" width="8" height="13" viewBox="0 0 8 13" fill="none" stroke="#c8c8c8" stroke-width="1.1"><path d="M7.4 0.5L0.8 6.5 7.4 12.5"/></svg>
<div class="abs" style="left:1808px;top:1032px;width:30px;height:30px;border-radius:50%;background:#3a8ede"></div>
<div class="t" style="left:1808px;top:1041px;width:30px;text-align:center;font-size:13.5px;font-weight:bold;color:#fff">1</div>
<svg class="abs" style="left:1852px;top:1041px" width="8" height="13" viewBox="0 0 8 13" fill="none" stroke="#c8c8c8" stroke-width="1.1"><path d="M0.6 0.5L7.2 6.5 0.6 12.5"/></svg>
</div></body></html>
